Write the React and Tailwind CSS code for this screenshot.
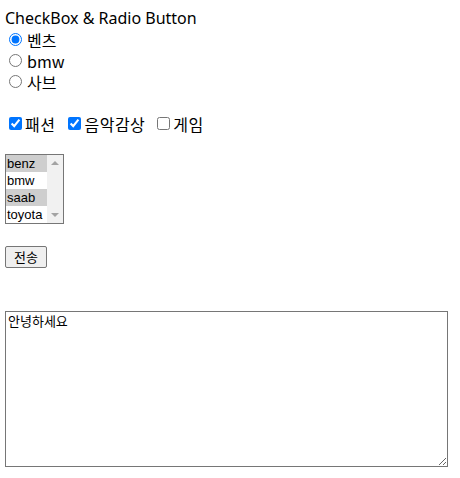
import React from 'react';

const cars = [
  { name: 'benz', selected: true },
  { name: 'bmw', selected: false },
  { name: 'saab', selected: true },
  { name: 'toyota', selected: false },
];

const App = () => {
  return (
    <div className="min-h-[478px] bg-white text-black pl-[5px] pt-[8px] font-['Noto_Sans','Noto_Sans_CJK_KR',sans-serif] text-[16px]">
      {/* Title */}
      <p className="h-[21px] leading-[21px]">CheckBox &amp; Radio Button</p>

      {/* Radios */}
      <div className="flex flex-col">
        {['벤츠', 'bmw', '사브'].map((v, i) => (
          <label key={v} className="flex items-center h-[21px]">
            <input
              type="radio"
              name="car"
              defaultChecked={i === 0}
              className="w-[13px] h-[13px] ml-[4px] mr-[5px]"
            />
            <span className="leading-[18px] font-['Noto_Sans_CJK_KR',sans-serif]">{v}</span>
          </label>
        ))}
      </div>

      {/* Checkboxes */}
      <div className="flex items-center h-[21px] mt-[21px] font-['Noto_Sans_CJK_KR',sans-serif] tracking-[0.5px]">
        <label className="flex items-center">
          <input type="checkbox" defaultChecked className="w-[13px] h-[13px] ml-[4px] mr-[3px]" />
          <span className="leading-[18px]">패션</span>
        </label>
        <label className="flex items-center ml-[13px]">
          <input type="checkbox" defaultChecked className="w-[13px] h-[13px] mr-[3px]" />
          <span className="leading-[18px]">음악감상</span>
        </label>
        <label className="flex items-center ml-[12px]">
          <input type="checkbox" className="w-[13px] h-[13px] mr-[3px]" />
          <span className="leading-[18px]">게임</span>
        </label>
      </div>

      {/* List box */}
      <div className="mt-[20px] flex w-[59px] h-[70px] border border-[#767676] font-['Liberation_Sans',sans-serif] text-[13px]">
        <div className="flex-1 flex flex-col">
          {cars.map((c) => (
            <div
              key={c.name}
              className={`h-[17px] leading-[17px] pl-[1px] ${c.selected ? 'bg-[#cecece]' : ''}`}
            >
              {c.name}
            </div>
          ))}
        </div>
        <div className="w-[16px] bg-[#f1f1f1] flex flex-col items-center justify-between py-[6px]">
          <span className="w-0 h-0 border-l-[4px] border-r-[4px] border-b-[4px] border-l-transparent border-r-transparent border-b-[#a3a3a3]" />
          <span className="w-0 h-0 border-l-[4px] border-r-[4px] border-t-[4px] border-l-transparent border-r-transparent border-t-[#a3a3a3]" />
        </div>
      </div>

      {/* Submit */}
      <button className="mt-[22px] h-[22px] px-[8px] border border-[#767676] rounded-[2px] bg-[#efefef] text-[13px] leading-[20px] font-['Noto_Sans_CJK_KR',sans-serif]">
        전송
      </button>

      {/* Textarea */}
      <div className="mt-[43px]">
        <textarea
          defaultValue="안녕하세요"
          className="block w-[443px] h-[156px] border border-[#767676] px-[2px] py-[1px] text-[13px] leading-[16px] resize font-['Noto_Sans_CJK_KR',monospace]"
        />
      </div>
    </div>
  );
};

export default App;
